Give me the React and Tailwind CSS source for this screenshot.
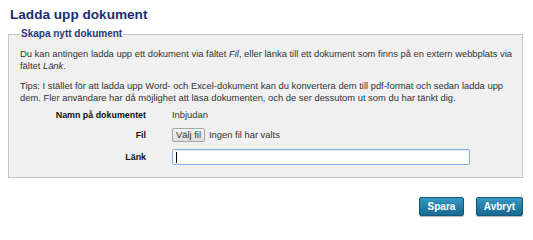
export default function App() {
  const font = { fontFamily: '"Liberation Sans", Arial, sans-serif' };
  return (
    <div className="w-[533px] h-[234px] bg-white pl-[8px] pt-[6px] text-[#333]" style={font}>
      {/* Rubrik */}
      <h1 className="ml-[2px] text-[13.6px] font-bold leading-[18px] text-[#1d2d6b]">Ladda upp dokument</h1>

      {/* Formulär */}
      <fieldset className="mt-[4px] w-[515px] h-[150px] border border-[#c4c4c4] bg-[#f0f0f0] pl-[11px] pr-[10px]">
        <legend className="px-[1px] text-[10px] font-bold leading-[12px] text-[#253a7a]">Skapa nytt dokument</legend>
        <p className="mt-[8px] text-[9.4px] leading-[12px]">
          Du kan antingen ladda upp ett dokument via fältet <i>Fil</i>, eller länka till ett dokument som finns på en extern webbplats via
          fältet <i>Länk</i>.
        </p>
        <p className="mt-[8px] text-[9.4px] leading-[12px]">
          Tips: I stället för att ladda upp Word- och Excel-dokument kan du konvertera dem till pdf-format och sedan ladda upp
          dem. Fler användare har då möjlighet att läsa dokumenten, och de ser dessutom ut som du har tänkt dig.
        </p>

        <div className="mt-[1px] grid grid-cols-[126px_1fr] gap-x-[26px] text-[9.4px] items-center">
          <div className="h-[20px] leading-[20px] text-right font-bold text-[8.9px] text-[#111]">Namn på dokumentet</div>
          <div className="h-[20px] leading-[20px]">Inbjudan</div>

          <div className="h-[20px] leading-[20px] text-right font-bold text-[8.9px] text-[#111]">Fil</div>
          <div className="h-[20px] flex items-center gap-[4px]">
            <span className="h-[14px] px-[3px] flex items-center border border-[#a7a7a7] rounded-[2px] bg-gradient-to-b from-[#f6f6f6] to-[#dedede] text-[#333]">Välj fil</span>
            <span>Ingen fil har valts</span>
          </div>

          <div className="h-[24px] leading-[24px] text-right font-bold text-[8.9px] text-[#111]">Länk</div>
          <div className="h-[24px] flex items-center">
            <div className="w-[298px] h-[16px] border border-[#86b0dc] rounded-[2px] bg-white flex items-center pl-[3px] shadow-[inset_0_1px_1px_rgba(0,0,0,0.08)]">
              <span className="w-px h-[11px] bg-black" />
            </div>
          </div>
        </div>
      </fieldset>

      {/* Knappar */}
      <div className="mt-[19px] w-[515px] flex justify-end gap-[12px]">
        <button className="w-[45px] h-[19px] rounded-[2px] border border-[#15597a] bg-gradient-to-b from-[#3497c0] to-[#186990] text-white text-[10px] font-bold shadow-[0_1px_1px_rgba(0,0,0,0.3)]">Spara</button>
        <button className="w-[47px] h-[19px] rounded-[2px] border border-[#15597a] bg-gradient-to-b from-[#3497c0] to-[#186990] text-white text-[10px] font-bold shadow-[0_1px_1px_rgba(0,0,0,0.3)]">Avbryt</button>
      </div>
    </div>
  );
}
